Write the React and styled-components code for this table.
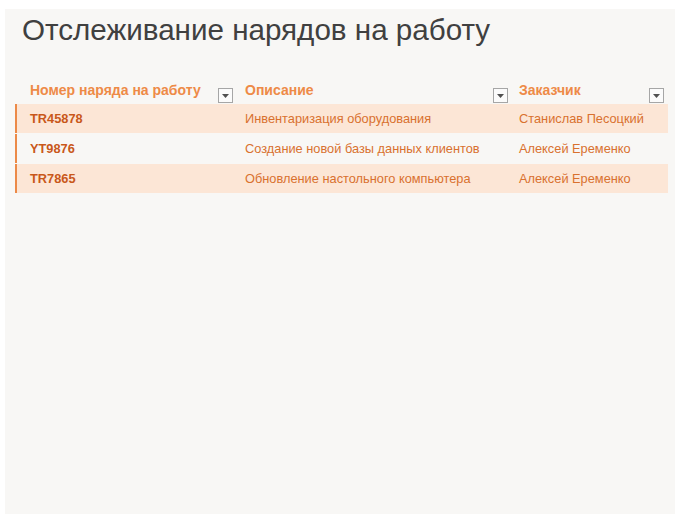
import styled, { createGlobalStyle } from "styled-components";

const orders = [
  { id: "TR45878", desc: "Инвентаризация оборудования", client: "Станислав Песоцкий" },
  { id: "YT9876", desc: "Создание новой базы данных клиентов", client: "Алексей Еременко" },
  { id: "TR7865", desc: "Обновление настольного компьютера", client: "Алексей Еременко" },
];

const columns = [
  { title: "Номер наряда на работу", pad: 15 },
  { title: "Описание", pad: 8 },
  { title: "Заказчик", pad: 7 },
];

const GlobalStyle = createGlobalStyle`
  body {
    margin: 0;
    background: #ffffff;
    font-family: "Liberation Sans", Arial, sans-serif;
  }
`;

export default function App() {
  return (
    <>
      <GlobalStyle />
      <Page>
        <Panel>
          <Title>Отслеживание нарядов на работу</Title>
          <Table>
            <HeaderRow>
              {columns.map((c, i) => (
                <HeaderCell key={i} pad={c.pad}>
                  <span>{c.title}</span>
                  <FilterBtn>
                    <svg width="7" height="4" viewBox="0 0 7 4">
                      <path d="M0 0h7L3.5 4z" fill="#505050" />
                    </svg>
                  </FilterBtn>
                </HeaderCell>
              ))}
            </HeaderRow>
            {orders.map((o, i) => (
              <Row key={i} shaded={i % 2 === 0}>
                <IdCell>{o.id}</IdCell>
                <Cell pad={6}>{o.desc}</Cell>
                <Cell pad={5}>{o.client}</Cell>
              </Row>
            ))}
          </Table>
        </Panel>
      </Page>
    </>
  );
}

const Page = styled.div`
  width: 675px;
  height: 520px;
  padding: 9px 0 6px 5px;
  box-sizing: border-box;
`;

const Panel = styled.div`
  height: 100%;
  background: #f8f7f5;
  padding: 0 0 0 10px;
  box-sizing: border-box;
`;

const Title = styled.h1`
  margin: 0;
  padding: 4px 0 0 7px;
  font-size: 29.6px;
  font-weight: normal;
  line-height: 34px;
  color: #404040;
`;

const Table = styled.div`
  margin-top: 31px;
  width: 653px;
`;

const grid = `
  display: grid;
  grid-template-columns: 222px 275px 156px;
`;

const HeaderRow = styled.div`
  ${grid}
  height: 26px;
`;

const HeaderCell = styled.div`
  display: flex;
  justify-content: space-between;
  align-items: flex-start;
  padding: 4px 4px 0 ${(p) => p.pad}px;
  font-size: 14px;
  font-weight: bold;
  color: #ee8a47;

  span {
    line-height: 16px;
  }
`;

const FilterBtn = styled.div`
  margin-top: 6px;
  width: 13px;
  height: 13px;
  border: 1px solid #a6a6a6;
  background: #fbfbfb;
  display: flex;
  align-items: center;
  justify-content: center;
`;

const Row = styled.div`
  ${grid}
  height: 29px;
  margin-bottom: 1px;
  align-items: center;
  background: ${(p) => (p.shaded ? "#fce6d6" : "transparent")};
  border-left: 2px solid #ec8a48;
  font-size: 12.8px;
  color: #d9712f;
`;

const Cell = styled.div`
  padding-left: ${(p) => p.pad}px;
  white-space: nowrap;
`;

const IdCell = styled.div`
  padding-left: 13px;
  font-weight: bold;
  color: #c9581a;
`;
